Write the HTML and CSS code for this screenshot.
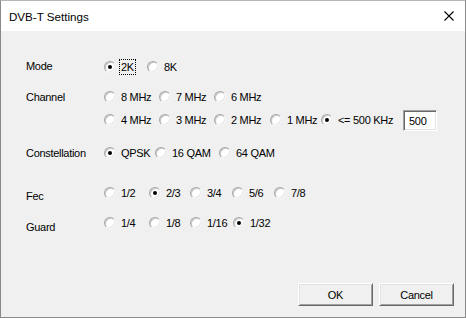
FILE: index.html
```html
<!DOCTYPE html>
<html>
<head>
<meta charset="utf-8">
<link rel="stylesheet" href="styles.css">
</head>
<body>
<div class="window">
  <div class="titlebar">
    <span class="title">DVB-T Settings</span>
    <svg class="close" width="10" height="10" viewBox="0 0 10 10"><path d="M0.5 0.5 L9.5 9.5 M9.5 0.5 L0.5 9.5" stroke="#000" stroke-width="1.1" fill="none"/></svg>
  </div>
  <div class="client">
    <div class="form">
      <div class="row row-mode">
        <div class="label lab-up">Mode</div>
        <div class="line opts-mode">
          <label class="opt"><span class="radio checked"></span><span class="text focus">2K</span></label>
          <label class="opt"><span class="radio"></span><span class="text">8K</span></label>
        </div>
      </div>
      <div class="row row-channel">
        <div class="label">Channel</div>
        <div class="lines">
          <div class="line opts-ch1">
            <label class="opt"><span class="radio"></span><span class="text">8 MHz</span></label>
            <label class="opt"><span class="radio"></span><span class="text">7 MHz</span></label>
            <label class="opt"><span class="radio"></span><span class="text">6 MHz</span></label>
          </div>
          <div class="line line2 opts-ch2">
            <label class="opt"><span class="radio"></span><span class="text">4 MHz</span></label>
            <label class="opt"><span class="radio"></span><span class="text">3 MHz</span></label>
            <label class="opt"><span class="radio"></span><span class="text">2 MHz</span></label>
            <label class="opt"><span class="radio"></span><span class="text">1 MHz</span></label>
            <label class="opt"><span class="radio checked"></span><span class="text">&lt;= 500 KHz</span></label>
            <div class="edit">500</div>
          </div>
        </div>
      </div>
      <div class="row row-const">
        <div class="label">Constellation</div>
        <div class="line opts-const">
          <label class="opt"><span class="radio checked"></span><span class="text">QPSK</span></label>
          <label class="opt"><span class="radio"></span><span class="text">16 QAM</span></label>
          <label class="opt"><span class="radio"></span><span class="text">64 QAM</span></label>
        </div>
      </div>
      <div class="row row-fec">
        <div class="label lab-down3">Fec</div>
        <div class="line opts-fec">
          <label class="opt"><span class="radio"></span><span class="text">1/2</span></label>
          <label class="opt"><span class="radio checked"></span><span class="text">2/3</span></label>
          <label class="opt"><span class="radio"></span><span class="text">3/4</span></label>
          <label class="opt"><span class="radio"></span><span class="text">5/6</span></label>
          <label class="opt"><span class="radio"></span><span class="text">7/8</span></label>
        </div>
      </div>
      <div class="row row-guard">
        <div class="label lab-down4">Guard</div>
        <div class="line opts-guard">
          <label class="opt"><span class="radio"></span><span class="text">1/4</span></label>
          <label class="opt"><span class="radio"></span><span class="text">1/8</span></label>
          <label class="opt"><span class="radio"></span><span class="text">1/16</span></label>
          <label class="opt"><span class="radio checked"></span><span class="text">1/32</span></label>
        </div>
      </div>
    </div>
    <div class="footer">
      <div class="button">OK</div>
      <div class="button">Cancel</div>
    </div>
  </div>
</div>
</body>
</html>
```
FILE: styles.css
```css
html, body {
  margin: 0;
  padding: 0;
  background: #f0f0f0;
}
body {
  width: 466px;
  height: 318px;
  overflow: hidden;
  font-family: "Liberation Sans", Arial, sans-serif;
  font-size: 11px;
  letter-spacing: -0.3px;
  color: #000;
}
.window {
  box-sizing: border-box;
  width: 466px;
  height: 318px;
  border: 1px solid #8a8a8a;
  border-top-color: #b5b5b5;
  display: flex;
  flex-direction: column;
  background: #f0f0f0;
}
.titlebar {
  height: 30px;
  background: #fff;
  display: flex;
  align-items: center;
  justify-content: space-between;
  padding: 0 11px 0 8px;
}
.title {
  font-size: 11.6px;
  letter-spacing: 0;
  color: #000;
}
.close {
  display: block;
}
.client {
  flex: 1;
  display: flex;
  flex-direction: column;
}
.form {
  padding: 28px 0 0 25px;
  display: flex;
  flex-direction: column;
}
.row {
  display: grid;
  grid-template-columns: 78px 1fr;
  grid-template-rows: 16px;
  align-items: start;
}
.row-channel { margin-top: 14px; grid-template-rows: auto; }
.row-const { margin-top: 17px; }
.row-fec { margin-top: 24px; }
.row-guard { margin-top: 14px; }
.label {
  height: 16px;
  line-height: 16px;
  white-space: nowrap;
}
.lab-up { margin-top: -1px; }
.lab-down3 { margin-top: 3px; }
.lab-down4 { margin-top: 4px; }
.lines {
  display: flex;
  flex-direction: column;
}
.line {
  height: 16px;
  display: grid;
  grid-template-rows: 16px;
  align-items: center;
}
.line2 { margin-top: 7px; }
.opts-mode { grid-template-columns: 43px auto; justify-content: start; }
.opts-ch1 { grid-template-columns: 55px 55px auto; justify-content: start; }
.opts-ch2 { grid-template-columns: 55px 55px 56px 51px 82px auto; justify-content: start; }
.opts-const { grid-template-columns: 51px 64px auto; justify-content: start; }
.opts-fec { grid-template-columns: 45px 41px 42px 42px auto; justify-content: start; }
.opts-guard { grid-template-columns: 45px 41px 43px auto; justify-content: start; }
.opt {
  display: flex;
  align-items: center;
  white-space: nowrap;
  height: 16px;
}
.radio {
  position: relative;
  box-sizing: border-box;
  width: 12px;
  height: 12px;
  border-radius: 50%;
  border: 1px solid;
  border-color: #a8a8a8 #f4f4f4 #f4f4f4 #a8a8a8;
  box-shadow: inset 1px 1px 0 #c8c8c8, inset -1px -1px 0 #e6e6e6;
  background: #fff;
  margin-right: 4px;
  flex: none;
}
.radio.checked::after {
  content: "";
  position: absolute;
  left: 3px;
  top: 3px;
  width: 4px;
  height: 4px;
  border-radius: 50%;
  background: #000;
}
.text {
  line-height: 14px;
  padding: 0 1px;
  margin-left: -1px;
  border: 1px solid transparent;
}
.focus {
  border: 1px dotted #000;
}
.edit {
  box-sizing: border-box;
  width: 34px;
  height: 21px;
  align-self: center;
  background: #fff;
  border: 1px solid;
  border-color: #a0a0a0 #fff #fff #a0a0a0;
  box-shadow: inset 1px 1px 0 #696969, inset -1px -1px 0 #e3e3e3;
  padding: 3px 0 0 5px;
  line-height: 14px;
}
.footer {
  margin-top: auto;
  display: flex;
  justify-content: flex-end;
  gap: 6px;
  padding: 0 11px 11px 0;
}
.button {
  box-sizing: border-box;
  width: 75px;
  height: 23px;
  display: flex;
  align-items: center;
  justify-content: center;
  background: #f0f0f0;
  border: 1px solid;
  border-color: #fff #696969 #696969 #fff;
  box-shadow: inset 1px 1px 0 #e3e3e3, inset -1px -1px 0 #a0a0a0;
}
```
